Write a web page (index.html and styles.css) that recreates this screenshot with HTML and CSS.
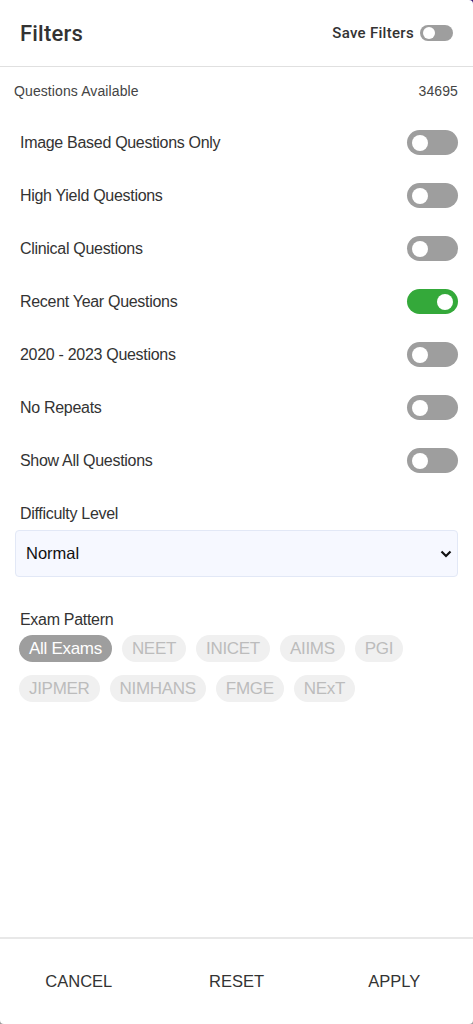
FILE: index.html
```html
<!DOCTYPE html>
<html lang="en">
<head>
  <meta charset="UTF-8">
  <title>Filters</title>
  <meta name="viewport" content="width=device-width, initial-scale=1.0">
  <link rel="stylesheet" href="styles.css">
</head>
<body>
  <div class="modal">
    <div class="header">
      <h2>Filters</h2>
      <label class="save">Save Filters <span class="toggle small"></span></label>
    </div>

    <div class="content">
      <div class="available">
        <span>Questions Available</span>
        <span>34695</span>
      </div>

      <div class="row">Image Based Questions Only <span class="toggle"></span></div>
      <div class="row">High Yield Questions <span class="toggle"></span></div>
      <div class="row">Clinical Questions <span class="toggle"></span></div>
      <div class="row">Recent Year Questions <span class="toggle on"></span></div>
      <div class="row">2020 - 2023 Questions <span class="toggle"></span></div>
      <div class="row">No Repeats <span class="toggle"></span></div>
      <div class="row">Show All Questions <span class="toggle"></span></div>

      <div class="label">Difficulty Level</div>
      <div class="select">
        <span>Normal</span>
        <svg width="12" height="8" viewBox="0 0 12 8"><path d="M1.5 1.5 L6 6 L10.5 1.5" fill="none" stroke="#111" stroke-width="2.2"/></svg>
      </div>

      <div class="label exam">Exam Pattern</div>
      <div class="chips">
        <span class="chip active">All Exams</span>
        <span class="chip">NEET</span>
        <span class="chip">INICET</span>
        <span class="chip">AIIMS</span>
        <span class="chip">PGI</span>
        <span class="chip">JIPMER</span>
        <span class="chip">NIMHANS</span>
        <span class="chip">FMGE</span>
        <span class="chip">NExT</span>
      </div>
    </div>

    <div class="footer">
      <button>CANCEL</button>
      <button>RESET</button>
      <button>APPLY</button>
    </div>
  </div>
</body>
</html>
```

FILE: styles.css
```css
body {
  margin: 0;
  padding: 0;
  background: linear-gradient(#3a1a78 50%, #9a9a9a 50%);
  font-family: "Liberation Sans", Arial, sans-serif;
}

.modal {
  width: 473px;
  height: 1024px;
  background: #fff;
  border-radius: 0 4px 4px 4px;
  display: flex;
  flex-direction: column;
}

.header {
  height: 66px;
  display: flex;
  align-items: center;
  justify-content: space-between;
  padding: 0 21px 0 20px;
  border-bottom: 1px solid #e0e0e0;
}

.header h2 {
  margin: 0;
  font-family: Roboto, sans-serif;
  font-weight: 500;
  font-size: 22px;
  letter-spacing: 0.2px;
  color: #333;
}

.save {
  display: flex;
  align-items: center;
  gap: 6px;
  margin-right: -1px;
  font-family: Roboto, sans-serif;
  font-weight: 500;
  font-size: 15px;
  letter-spacing: 0.3px;
  color: #333;
}

.content {
  flex: 1;
  padding: 0 15px 0 15px;
}

.available {
  display: flex;
  justify-content: space-between;
  margin-left: -1px;
  font-size: 14px;
  letter-spacing: 0.1px;
  color: #444;
  padding: 16px 0 0 0;
  height: 32px;
  margin-bottom: 1px;
}

.row {
  display: flex;
  align-items: center;
  justify-content: space-between;
  height: 53px;
  padding-left: 5px;
  font-size: 16px;
  letter-spacing: -0.3px;
  color: #333;
}

.toggle {
  width: 51px;
  height: 25px;
  border-radius: 13px;
  background: #9e9e9e;
  position: relative;
  flex-shrink: 0;
}

.toggle::after {
  content: "";
  position: absolute;
  top: 4.5px;
  left: 5px;
  width: 16px;
  height: 16px;
  border-radius: 50%;
  background: #fff;
}

.toggle.on { background: #34a93a; }
.toggle.on::after { left: auto; right: 5px; }

.toggle.small {
  width: 33px;
  height: 16px;
  border-radius: 8px;
}

.toggle.small::after {
  top: 2px;
  left: 3px;
  width: 12px;
  height: 12px;
}

.label {
  font-size: 16px;
  letter-spacing: -0.3px;
  color: #333;
  padding-left: 5px;
  margin-top: 18px;
  height: 22px;
}

.select {
  margin-top: 3px;
  height: 45px;
  border: 1px solid #e2e8f6;
  border-radius: 4px;
  background: #f6f8ff;
  display: flex;
  align-items: center;
  justify-content: space-between;
  padding: 0 5px 0 10px;
  font-size: 16.5px;
  color: #111;
}

.label.exam {
  margin-top: 34px;
  height: 16px;
}

.chips {
  display: flex;
  flex-wrap: wrap;
  gap: 13px 10px;
  padding-left: 4px;
  margin-top: 8px;
  width: 400px;
}

.chip {
  height: 27px;
  line-height: 27px;
  padding: 0 10px;
  border-radius: 14px;
  background: #f0f0f0;
  color: #bcbcbc;
  font-size: 17px;
  letter-spacing: -0.3px;
}

.chip.active {
  background: #9e9e9e;
  color: #fff;
}

.footer {
  height: 85px;
  border-top: 2px solid #e8e8e8;
  display: flex;
}

.footer button {
  flex: 1;
  border: none;
  background: none;
  font-family: "Liberation Sans", Arial, sans-serif;
  font-size: 16.5px;
  color: #333;
  padding: 0;
}
```
